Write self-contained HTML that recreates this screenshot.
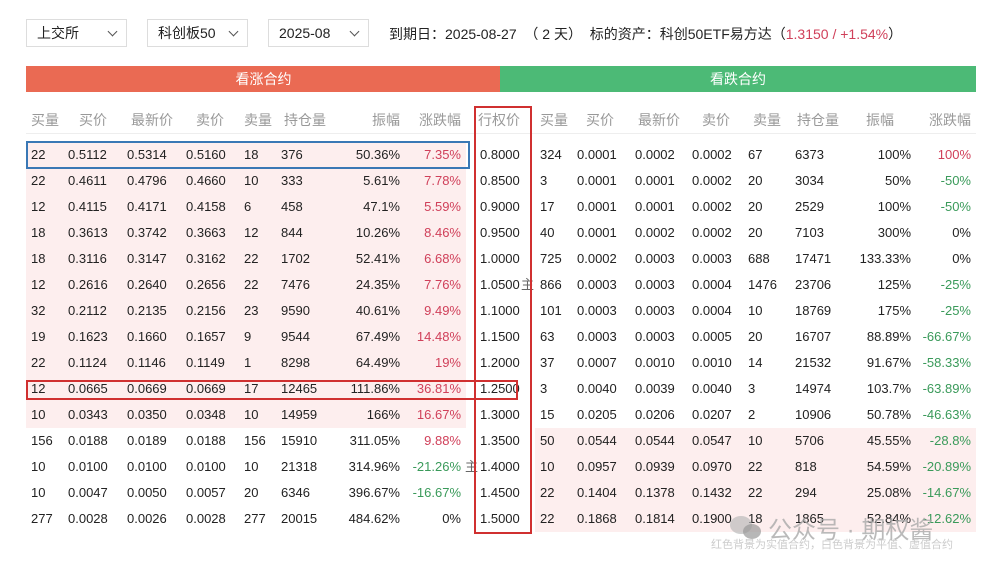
<!DOCTYPE html>
<html><head><meta charset="utf-8"><style>
body{margin:0;width:987px;height:569px;background:#fff;font-family:"Liberation Sans","Noto Sans CJK SC",sans-serif;font-size:13px;color:#222;position:relative;overflow:hidden}
.a{position:absolute;white-space:nowrap}
.dd{position:absolute;top:19px;height:28px;border:1px solid #ddd;box-sizing:border-box;font-size:14px;line-height:27px;padding-left:10px}
.dd i{position:absolute;right:10px;top:8px;width:6px;height:6px;border-right:1.3px solid #555;border-bottom:1.3px solid #555;transform:rotate(45deg)}
.row{position:absolute;left:0;width:987px;height:26px;line-height:26px}
.row span{position:absolute}
.pl{position:absolute;left:26px;width:440px;height:26px;background:#fdeeee}
.pr{position:absolute;left:535px;width:441px;height:26px;background:#fdeeee}
.c1{left:31px}.c2{left:68px}.c3{left:127px}.c4{left:186px}.c5{left:244px}.c6{left:281px}
.c7{right:587px;text-align:right}.c8{right:526px;text-align:right}
.k{left:480px}
.d1{left:540px}.d2{left:577px}.d3{left:635px}.d4{left:692px}.d5{left:748px}.d6{left:795px}
.d7{right:76px}.d8{right:16px}
.r{color:#d0405a}.g{color:#3a9a5a}
.hd{color:#999;font-size:14px}
</style></head><body>
<div class="dd" style="left:26px;width:101px">上交所<i></i></div>
<div class="dd" style="left:147px;width:101px">科创板50<i></i></div>
<div class="dd" style="left:268px;width:101px">2025-08<i></i></div>
<div class="a" style="left:389px;top:24px;font-size:14px">到期日：2025-08-27 &nbsp;（ 2 天） &nbsp;标的资产：科创50ETF易方达（<span class="r">1.3150 / +1.54%</span>）</div>
<div class="a" style="left:26px;top:66px;width:475px;height:26px;background:#ea6a53;color:#fff;text-align:center;line-height:26px;font-size:14px">看涨合约</div>
<div class="a" style="left:500px;top:66px;width:476px;height:26px;background:#4cba76;color:#fff;text-align:center;line-height:26px;font-size:14px">看跌合约</div>
<div class="a" style="left:26px;top:133px;width:950px;height:1px;background:#eee"></div>
<div class="row hd" style="top:107px"><span class="c1">买量</span><span class="c2" style="left:79px">买价</span><span class="c3" style="left:131px">最新价</span><span class="c4" style="left:196px">卖价</span><span class="c5">卖量</span><span class="c6" style="left:284px">持仓量</span><span class="c7">振幅</span><span class="c8">涨跌幅</span><span class="k" style="left:478px">行权价</span><span class="d1">买量</span><span class="d2" style="left:586px">买价</span><span class="d3" style="left:638px">最新价</span><span class="d4" style="left:702px">卖价</span><span class="d5" style="left:753px">卖量</span><span class="d6" style="left:797px">持仓量</span><span class="d7" style="right:93px">振幅</span><span class="d8">涨跌幅</span></div>

<div class="row" style="top:142px"><div class="pl"></div><span class="c1">22</span><span class="c2">0.5112</span><span class="c3">0.5314</span><span class="c4">0.5160</span><span class="c5">18</span><span class="c6">376</span><span class="c7">50.36%</span><span class="c8 r">7.35%</span><span class="k">0.8000</span><span class="d1">324</span><span class="d2">0.0001</span><span class="d3">0.0002</span><span class="d4">0.0002</span><span class="d5">67</span><span class="d6">6373</span><span class="d7">100%</span><span class="d8 r">100%</span></div>
<div class="row" style="top:168px"><div class="pl"></div><span class="c1">22</span><span class="c2">0.4611</span><span class="c3">0.4796</span><span class="c4">0.4660</span><span class="c5">10</span><span class="c6">333</span><span class="c7">5.61%</span><span class="c8 r">7.78%</span><span class="k">0.8500</span><span class="d1">3</span><span class="d2">0.0001</span><span class="d3">0.0001</span><span class="d4">0.0002</span><span class="d5">20</span><span class="d6">3034</span><span class="d7">50%</span><span class="d8 g">-50%</span></div>
<div class="row" style="top:194px"><div class="pl"></div><span class="c1">12</span><span class="c2">0.4115</span><span class="c3">0.4171</span><span class="c4">0.4158</span><span class="c5">6</span><span class="c6">458</span><span class="c7">47.1%</span><span class="c8 r">5.59%</span><span class="k">0.9000</span><span class="d1">17</span><span class="d2">0.0001</span><span class="d3">0.0001</span><span class="d4">0.0002</span><span class="d5">20</span><span class="d6">2529</span><span class="d7">100%</span><span class="d8 g">-50%</span></div>
<div class="row" style="top:220px"><div class="pl"></div><span class="c1">18</span><span class="c2">0.3613</span><span class="c3">0.3742</span><span class="c4">0.3663</span><span class="c5">12</span><span class="c6">844</span><span class="c7">10.26%</span><span class="c8 r">8.46%</span><span class="k">0.9500</span><span class="d1">40</span><span class="d2">0.0001</span><span class="d3">0.0002</span><span class="d4">0.0002</span><span class="d5">20</span><span class="d6">7103</span><span class="d7">300%</span><span class="d8">0%</span></div>
<div class="row" style="top:246px"><div class="pl"></div><span class="c1">18</span><span class="c2">0.3116</span><span class="c3">0.3147</span><span class="c4">0.3162</span><span class="c5">22</span><span class="c6">1702</span><span class="c7">52.41%</span><span class="c8 r">6.68%</span><span class="k">1.0000</span><span class="d1">725</span><span class="d2">0.0002</span><span class="d3">0.0003</span><span class="d4">0.0003</span><span class="d5">688</span><span class="d6">17471</span><span class="d7">133.33%</span><span class="d8">0%</span></div>
<div class="row" style="top:272px"><div class="pl"></div><span class="c1">12</span><span class="c2">0.2616</span><span class="c3">0.2640</span><span class="c4">0.2656</span><span class="c5">22</span><span class="c6">7476</span><span class="c7">24.35%</span><span class="c8 r">7.76%</span><span class="k">1.0500</span><span style="left:521px;color:#666">主</span><span class="d1">866</span><span class="d2">0.0003</span><span class="d3">0.0003</span><span class="d4">0.0004</span><span class="d5">1476</span><span class="d6">23706</span><span class="d7">125%</span><span class="d8 g">-25%</span></div>
<div class="row" style="top:298px"><div class="pl"></div><span class="c1">32</span><span class="c2">0.2112</span><span class="c3">0.2135</span><span class="c4">0.2156</span><span class="c5">23</span><span class="c6">9590</span><span class="c7">40.61%</span><span class="c8 r">9.49%</span><span class="k">1.1000</span><span class="d1">101</span><span class="d2">0.0003</span><span class="d3">0.0003</span><span class="d4">0.0004</span><span class="d5">10</span><span class="d6">18769</span><span class="d7">175%</span><span class="d8 g">-25%</span></div>
<div class="row" style="top:324px"><div class="pl"></div><span class="c1">19</span><span class="c2">0.1623</span><span class="c3">0.1660</span><span class="c4">0.1657</span><span class="c5">9</span><span class="c6">9544</span><span class="c7">67.49%</span><span class="c8 r">14.48%</span><span class="k">1.1500</span><span class="d1">63</span><span class="d2">0.0003</span><span class="d3">0.0003</span><span class="d4">0.0005</span><span class="d5">20</span><span class="d6">16707</span><span class="d7">88.89%</span><span class="d8 g">-66.67%</span></div>
<div class="row" style="top:350px"><div class="pl"></div><span class="c1">22</span><span class="c2">0.1124</span><span class="c3">0.1146</span><span class="c4">0.1149</span><span class="c5">1</span><span class="c6">8298</span><span class="c7">64.49%</span><span class="c8 r">19%</span><span class="k">1.2000</span><span class="d1">37</span><span class="d2">0.0007</span><span class="d3">0.0010</span><span class="d4">0.0010</span><span class="d5">14</span><span class="d6">21532</span><span class="d7">91.67%</span><span class="d8 g">-58.33%</span></div>
<div class="row" style="top:376px"><div class="pl"></div><span class="c1">12</span><span class="c2">0.0665</span><span class="c3">0.0669</span><span class="c4">0.0669</span><span class="c5">17</span><span class="c6">12465</span><span class="c7">111.86%</span><span class="c8 r">36.81%</span><span class="k">1.2500</span><span class="d1">3</span><span class="d2">0.0040</span><span class="d3">0.0039</span><span class="d4">0.0040</span><span class="d5">3</span><span class="d6">14974</span><span class="d7">103.7%</span><span class="d8 g">-63.89%</span></div>
<div class="row" style="top:402px"><div class="pl"></div><span class="c1">10</span><span class="c2">0.0343</span><span class="c3">0.0350</span><span class="c4">0.0348</span><span class="c5">10</span><span class="c6">14959</span><span class="c7">166%</span><span class="c8 r">16.67%</span><span class="k">1.3000</span><span class="d1">15</span><span class="d2">0.0205</span><span class="d3">0.0206</span><span class="d4">0.0207</span><span class="d5">2</span><span class="d6">10906</span><span class="d7">50.78%</span><span class="d8 g">-46.63%</span></div>
<div class="row" style="top:428px"><div class="pr"></div><span class="c1">156</span><span class="c2">0.0188</span><span class="c3">0.0189</span><span class="c4">0.0188</span><span class="c5">156</span><span class="c6">15910</span><span class="c7">311.05%</span><span class="c8 r">9.88%</span><span class="k">1.3500</span><span class="d1">50</span><span class="d2">0.0544</span><span class="d3">0.0544</span><span class="d4">0.0547</span><span class="d5">10</span><span class="d6">5706</span><span class="d7">45.55%</span><span class="d8 g">-28.8%</span></div>
<div class="row" style="top:454px"><div class="pr"></div><span class="c1">10</span><span class="c2">0.0100</span><span class="c3">0.0100</span><span class="c4">0.0100</span><span class="c5">10</span><span class="c6">21318</span><span class="c7">314.96%</span><span class="c8 g">-21.26%</span><span style="left:465px;color:#666">主</span><span class="k">1.4000</span><span class="d1">10</span><span class="d2">0.0957</span><span class="d3">0.0939</span><span class="d4">0.0970</span><span class="d5">22</span><span class="d6">818</span><span class="d7">54.59%</span><span class="d8 g">-20.89%</span></div>
<div class="row" style="top:480px"><div class="pr"></div><span class="c1">10</span><span class="c2">0.0047</span><span class="c3">0.0050</span><span class="c4">0.0057</span><span class="c5">20</span><span class="c6">6346</span><span class="c7">396.67%</span><span class="c8 g">-16.67%</span><span class="k">1.4500</span><span class="d1">22</span><span class="d2">0.1404</span><span class="d3">0.1378</span><span class="d4">0.1432</span><span class="d5">22</span><span class="d6">294</span><span class="d7">25.08%</span><span class="d8 g">-14.67%</span></div>
<div class="row" style="top:506px"><div class="pr"></div><span class="c1">277</span><span class="c2">0.0028</span><span class="c3">0.0026</span><span class="c4">0.0028</span><span class="c5">277</span><span class="c6">20015</span><span class="c7">484.62%</span><span class="c8">0%</span><span class="k">1.5000</span><span class="d1">22</span><span class="d2">0.1868</span><span class="d3">0.1814</span><span class="d4">0.1900</span><span class="d5">18</span><span class="d6">1865</span><span class="d7">52.84%</span><span class="d8 g">-12.62%</span></div>

<div class="a" style="left:26px;top:141px;width:444px;height:28px;border:2px solid #3a78b5;box-sizing:border-box"></div>
<div class="a" style="left:26px;top:380px;width:492px;height:20px;border:2px solid #d03030;box-sizing:border-box"></div>
<div class="a" style="left:474px;top:106px;width:58px;height:428px;border:2px solid #d03030;box-sizing:border-box"></div>

<div class="a" style="left:730px;top:516px;width:22px;height:18px;border-radius:50%;background:#bbb;opacity:.7"></div>
<div class="a" style="left:743px;top:524px;width:18px;height:15px;border-radius:50%;background:#999;opacity:.7"></div>
<div class="a" style="left:768px;top:510px;font-size:24px;color:#aaa;opacity:.8">公众号 · 期权酱</div>
<div class="a" style="left:711px;top:536px;font-size:11px;color:#ccc">红色背景为实值合约，白色背景为平值、虚值合约</div>
</body></html>
